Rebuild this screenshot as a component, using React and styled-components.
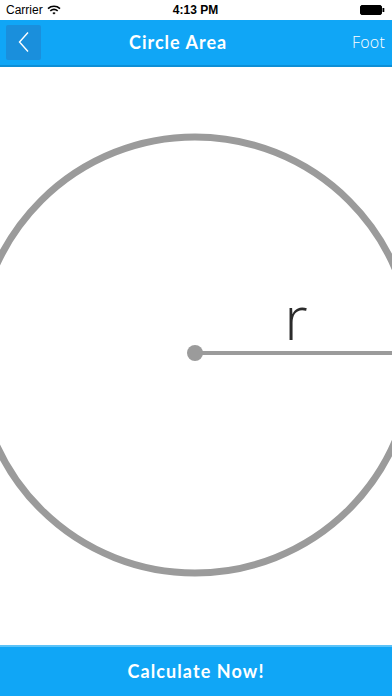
import React from "react";
import styled, { createGlobalStyle } from "styled-components";

const Global = createGlobalStyle`
  html, body { margin: 0; padding: 0; background: #fff; }
  body { font-family: "Lato", "Open Sans", "Liberation Sans", sans-serif; }
`;

const Screen = styled.div`
  width: 392px;
  height: 696px;
  display: flex;
  flex-direction: column;
  background: #fff;
  overflow: hidden;
`;

const StatusBar = styled.div`
  height: 20px;
  display: grid;
  grid-template-columns: 1fr auto 1fr;
  align-items: center;
  padding: 0 7px 0 6px;
  font-family: "Liberation Sans", Arial, sans-serif;
  font-size: 12px;
  color: #000;
`;

const StatusLeft = styled.div`
  display: flex;
  align-items: center;
  gap: 4px;
`;

const StatusTime = styled.div`
  font-weight: 700;
`;

const StatusRight = styled.div`
  display: flex;
  justify-content: flex-end;
  align-items: center;
`;

const NavBar = styled.div`
  height: 46px;
  background: #10a6f6;
  border-bottom: 2px solid #0d8fd6;
  display: grid;
  grid-template-columns: 123px auto 1fr;
  align-items: center;
  padding: 0 7px 0 6px;
`;

const BackButton = styled.div`
  width: 35px;
  height: 35px;
  background: #1a8fdc;
  border-radius: 2px;
  display: flex;
  align-items: center;
  justify-content: center;
`;

const Title = styled.div`
  color: #fff;
  font-weight: 700;
  font-size: 18px;
  letter-spacing: 1px;
`;

const NavRight = styled.div`
  color: #fff;
  font-family: "Open Sans", "Liberation Sans", sans-serif;
  font-weight: 300;
  font-size: 16px;
  text-align: right;
  letter-spacing: 0.2px;
`;

const Canvas = styled.div`
  flex: 1;
`;

const Figure = styled.svg`
  display: block;
  width: 392px;
  height: 578px;
`;

const CalcButton = styled.div`
  height: 50px;
  background: #10a6f6;
  border-top: 2px solid #5cc3f8;
  display: flex;
  align-items: center;
  justify-content: center;
  color: #fff;
  font-weight: 700;
  font-size: 18px;
  letter-spacing: 1.1px;
`;

export default function App() {
  return (
    <Screen>
      <Global />
      <StatusBar>
        <StatusLeft>
          <span>Carrier</span>
          <svg width="14" height="10" viewBox="0 0 14 10">
            <path d="M1 3.6 A9 9 0 0 1 13 3.6" stroke="#000" strokeWidth="1.6" fill="none" />
            <path d="M3.3 5.9 A5.8 5.8 0 0 1 10.7 5.9" stroke="#000" strokeWidth="1.6" fill="none" />
            <path d="M5.4 8 L7 9.6 L8.6 8 A2.4 2.4 0 0 0 5.4 8 Z" fill="#000" />
          </svg>
        </StatusLeft>
        <StatusTime>4:13 PM</StatusTime>
        <StatusRight>
          <svg width="25" height="10" viewBox="0 0 25 10">
            <rect x="0.5" y="0.5" width="21" height="9" rx="1.5" fill="#000" stroke="#000" />
            <rect x="22.5" y="3" width="1.8" height="4" fill="#000" />
          </svg>
        </StatusRight>
      </StatusBar>
      <NavBar>
        <div>
          <BackButton>
            <svg width="14" height="22" viewBox="0 0 14 22">
              <path d="M11 1.5 L2.5 11 L11 20.5" stroke="#fff" strokeWidth="1.4" fill="none" />
            </svg>
          </BackButton>
        </div>
        <Title>Circle Area</Title>
        <NavRight>Foot</NavRight>
      </NavBar>
      <Canvas>
        <Figure viewBox="0 68 392 578">
          <circle cx="195" cy="356" r="218" fill="none" stroke="#9b9b9b" strokeWidth="7" />
          <line x1="195" y1="354" x2="392" y2="354" stroke="#9b9b9b" strokeWidth="4" />
          <circle cx="195" cy="354" r="8" fill="#9b9b9b" />
          <text
            x="296"
            y="341"
            textAnchor="middle"
            fontFamily="'Open Sans', 'Liberation Sans', sans-serif"
            fontWeight="300"
            fontSize="60"
            fill="#2b2b2b"
          >
            r
          </text>
        </Figure>
      </Canvas>
      <CalcButton>Calculate Now!</CalcButton>
    </Screen>
  );
}
